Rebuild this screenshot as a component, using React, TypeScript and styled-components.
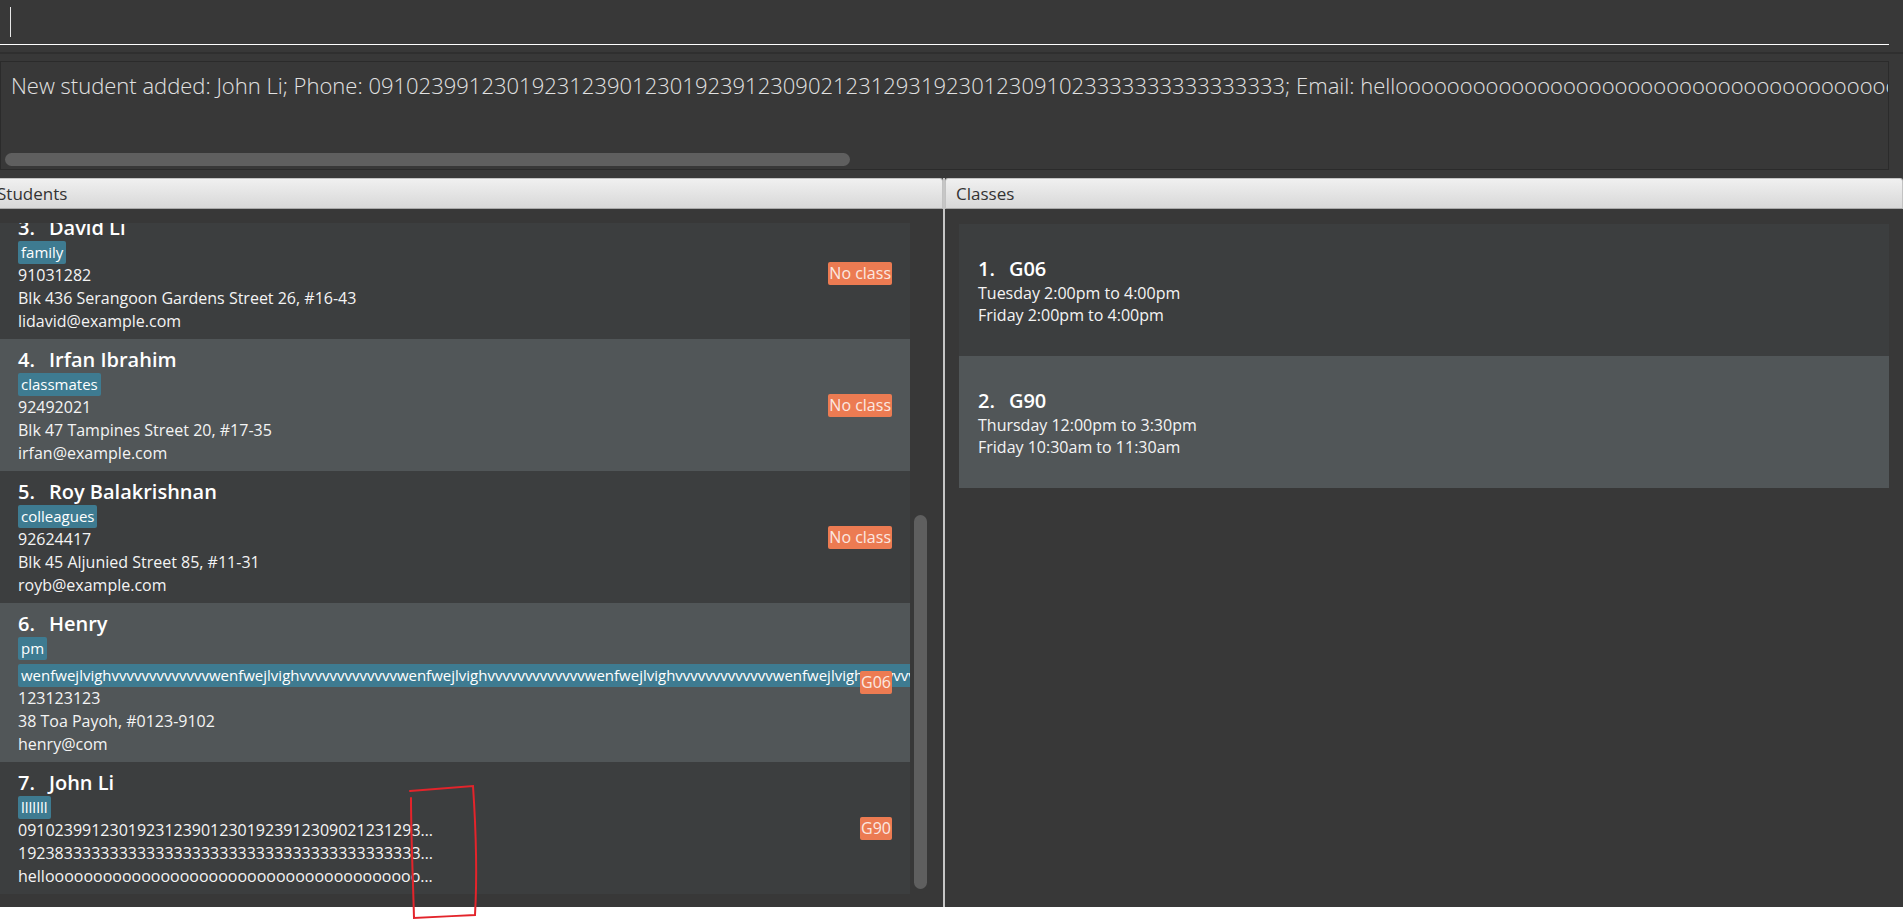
import React from "react";
import styled, { createGlobalStyle } from "styled-components";

const FONT = `"Open Sans", "Noto Sans", "Liberation Sans", sans-serif`;

const GlobalStyle = createGlobalStyle`
  html, body {
    margin: 0;
    padding: 0;
    background: #ffffff;
    overflow: hidden;
  }
  body {
    font-family: ${FONT};
  }
  * {
    box-sizing: border-box;
  }
`;

const Page = styled.div`
  position: relative;
  width: 1904px;
  height: 920px;
  background: #ffffff;
`;

const Window = styled.div`
  width: 1903px;
  height: 907px;
  background: #383838;
  display: flex;
  flex-direction: column;
  overflow: hidden;
`;

const CommandBox = styled.div`
  height: 54px;
  padding-right: 14px;
  border-bottom: 2px solid #2f2f2f;
  flex-shrink: 0;
`;

const CommandField = styled.div`
  height: 45px;
  border-bottom: 1px solid #ffffff;
  padding: 7px 0 0 10px;
`;

const Caret = styled.div`
  width: 1px;
  height: 30px;
  background: #e8e8e8;
`;

const ResultArea = styled.div`
  padding: 7px 14px 8px 0;
  flex-shrink: 0;
`;

const ResultBox = styled.div`
  height: 109px;
  border: 1px solid #2b2b2b;
  display: flex;
  flex-direction: column;
  overflow: hidden;
`;

const ResultText = styled.div`
  flex: 1;
  padding: 9px 0 0 10px;
  font-size: 22px;
  font-weight: 300;
  line-height: 28px;
  color: #e2e2e2;
  white-space: nowrap;
`;

const HScroll = styled.div`
  height: 13px;
  margin: 0 0 3px 4px;
`;

const HThumb = styled.div<{ $width: number }>`
  width: ${(p) => p.$width}px;
  height: 100%;
  border-radius: 7px;
  background: #5f5f5f;
`;

const Panels = styled.div`
  flex: 1;
  display: flex;
  min-height: 0;
`;

const StudentsPanel = styled.div`
  width: 957px;
  margin-left: -14px;
  flex-shrink: 0;
  display: flex;
  flex-direction: column;
`;

const ClassesPanel = styled.div`
  flex: 1;
  display: flex;
  flex-direction: column;
`;

const PanelHeader = styled.div`
  height: 31px;
  flex-shrink: 0;
  display: flex;
  align-items: center;
  padding-left: 10px;
  background: linear-gradient(#f0f0f0, #d8d8d8);
  border: 1px solid #c2c2c2;
  border-bottom-color: #a9a9a9;
  border-radius: 3px 3px 0 0;
  font-size: 17px;
  color: #333333;
`;

const Divider = styled.div`
  width: 2px;
  flex-shrink: 0;
  background: #c6c6c6;
`;

const StudentsBody = styled.div`
  flex: 1;
  display: flex;
  padding: 14px 16px 0 14px;
  min-height: 0;
`;

const StudentList = styled.div`
  width: 910px;
  overflow: hidden;
`;

const ListInner = styled.div<{ $offset: number }>`
  margin-top: -${(p) => p.$offset}px;
  display: flex;
  flex-direction: column;
`;

const VScroll = styled.div<{ $top: number }>`
  width: 13px;
  margin-left: 4px;
  padding-top: ${(p) => p.$top}px;
`;

const VThumb = styled.div<{ $height: number }>`
  height: ${(p) => p.$height}px;
  border-radius: 7px;
  background: #5f5f5f;
`;

const StudentCard = styled.div<{ $odd: boolean }>`
  display: flex;
  align-items: center;
  overflow: hidden;
  background: ${(p) => (p.$odd ? "#3c3e3f" : "#515658")};
`;

const CardInfo = styled.div`
  flex: 1;
  min-width: 0;
  padding: 6px 0 6px 18px;
  display: flex;
  flex-direction: column;
`;

const NameRow = styled.div`
  height: 28px;
  display: flex;
  align-items: center;
  font-size: 20px;
  font-weight: 600;
  color: #ffffff;
  white-space: nowrap;
`;

const Index = styled.span`
  margin-right: 14px;
`;

const TagRow = styled.div`
  display: flex;
  flex-wrap: wrap;
  gap: 4px;
`;

const Tag = styled.span`
  flex-shrink: 0;
  height: 23px;
  line-height: 23px;
  padding: 0 3px;
  border-radius: 2px;
  background: #3e7b91;
  color: #ffffff;
  font-size: 15px;
  white-space: nowrap;
`;

const InfoLine = styled.div`
  max-width: 424px;
  line-height: 23px;
  font-size: 16px;
  color: #f4f4f4;
  white-space: nowrap;
  overflow: hidden;
  text-overflow: ellipsis;
`;

const ClassBadge = styled.span`
  flex-shrink: 0;
  align-self: center;
  margin-right: 18px;
  height: 23px;
  line-height: 23px;
  padding: 0 1px;
  border-radius: 2px;
  background: #ec7b52;
  color: #fbe8e1;
  font-size: 16px;
  white-space: nowrap;
`;

const ClassesBody = styled.div`
  flex: 1;
  display: flex;
  flex-direction: column;
  padding: 15px 14px 0 14px;
`;

const ClassCard = styled.div<{ $odd: boolean }>`
  height: 132px;
  display: flex;
  flex-direction: column;
  justify-content: center;
  padding-left: 19px;
  background: ${(p) => (p.$odd ? "#3c3e3f" : "#515658")};
`;

const ScheduleLine = styled.div`
  line-height: 22px;
  font-size: 16px;
  color: #f4f4f4;
`;

const Annotation = styled.svg`
  position: absolute;
  top: 0;
  left: 0;
  pointer-events: none;
`;

interface Student {
  index: number;
  name: string;
  tags: string[];
  phone: string;
  address: string;
  email: string;
  group: string;
}

interface TutorialClass {
  index: number;
  name: string;
  slots: string[];
}

const longTag = "wenfwejlvighvvvvvvvvvvvvv".repeat(8);

const students: Student[] = [
  {
    index: 3,
    name: "David Li",
    tags: ["family"],
    phone: "91031282",
    address: "Blk 436 Serangoon Gardens Street 26, #16-43",
    email: "lidavid@example.com",
    group: "No class",
  },
  {
    index: 4,
    name: "Irfan Ibrahim",
    tags: ["classmates"],
    phone: "92492021",
    address: "Blk 47 Tampines Street 20, #17-35",
    email: "irfan@example.com",
    group: "No class",
  },
  {
    index: 5,
    name: "Roy Balakrishnan",
    tags: ["colleagues"],
    phone: "92624417",
    address: "Blk 45 Aljunied Street 85, #11-31",
    email: "royb@example.com",
    group: "No class",
  },
  {
    index: 6,
    name: "Henry",
    tags: ["pm", longTag],
    phone: "123123123",
    address: "38 Toa Payoh, #0123-9102",
    email: "henry@com",
    group: "G06",
  },
  {
    index: 7,
    name: "John Li",
    tags: ["lllllll"],
    phone: "0910239912301923123901230192391230902123129319230123091023333333333333333",
    address: "19238333333333333333333333333333333333333333333333333333333333",
    email: "hellooooooooooooooooooooooooooooooooooooooooooooooooooooo@example.com",
    group: "G90",
  },
];

const classes: TutorialClass[] = [
  { index: 1, name: "G06", slots: ["Tuesday 2:00pm to 4:00pm", "Friday 2:00pm to 4:00pm"] },
  { index: 2, name: "G90", slots: ["Thursday 12:00pm to 3:30pm", "Friday 10:30am to 11:30am"] },
];

const resultMessage =
  "New student added: John Li; Phone: 0910239912301923123901230192391230902123129319230123091023333333333333333; " +
  "Email: helloooooooooooooooooooooooooooooooooooooooooooooooooooooooooo@example.com; Address: 19238333333333333333333333333";

function StudentRow({ student }: { student: Student }): JSX.Element {
  return (
    <StudentCard $odd={student.index % 2 === 1}>
      <CardInfo>
        <NameRow>
          <Index>{student.index}.</Index>
          {student.name}
        </NameRow>
        <TagRow>
          {student.tags.map((tag) => (
            <Tag key={tag}>{tag}</Tag>
          ))}
        </TagRow>
        <InfoLine>{student.phone}</InfoLine>
        <InfoLine>{student.address}</InfoLine>
        <InfoLine>{student.email}</InfoLine>
      </CardInfo>
      <ClassBadge>{student.group}</ClassBadge>
    </StudentCard>
  );
}

function ClassRow({ item }: { item: TutorialClass }): JSX.Element {
  return (
    <ClassCard $odd={item.index % 2 === 1}>
      <NameRow>
        <Index>{item.index}.</Index>
        {item.name}
      </NameRow>
      {item.slots.map((slot) => (
        <ScheduleLine key={slot}>{slot}</ScheduleLine>
      ))}
    </ClassCard>
  );
}

export default function App(): JSX.Element {
  return (
    <Page>
      <GlobalStyle />
      <Window>
        <CommandBox>
          <CommandField>
            <Caret />
          </CommandField>
        </CommandBox>

        <ResultArea>
          <ResultBox>
            <ResultText>{resultMessage}</ResultText>
            <HScroll>
              <HThumb $width={845} />
            </HScroll>
          </ResultBox>
        </ResultArea>

        <Panels>
          <StudentsPanel>
            <PanelHeader>Students</PanelHeader>
            <StudentsBody>
              <StudentList>
                <ListInner $offset={16}>
                  {students.map((s) => (
                    <StudentRow key={s.index} student={s} />
                  ))}
                </ListInner>
              </StudentList>
              <VScroll $top={292}>
                <VThumb $height={374} />
              </VScroll>
            </StudentsBody>
          </StudentsPanel>

          <Divider />

          <ClassesPanel>
            <PanelHeader>Classes</PanelHeader>
            <ClassesBody>
              {classes.map((c) => (
                <ClassRow key={c.index} item={c} />
              ))}
            </ClassesBody>
          </ClassesPanel>
        </Panels>
      </Window>

      {/* red hand-drawn marker from the screenshot */}
      <Annotation width={1904} height={920} viewBox="0 0 1904 920">
        <path
          d="M410 791 C435 789 458 787 473 786 C476 830 477 880 475 915 C455 916 432 917 414 918 C413 880 411 835 411 798"
          fill="none"
          stroke="#e3242b"
          strokeWidth={2}
          strokeLinecap="round"
        />
      </Annotation>
    </Page>
  );
}
